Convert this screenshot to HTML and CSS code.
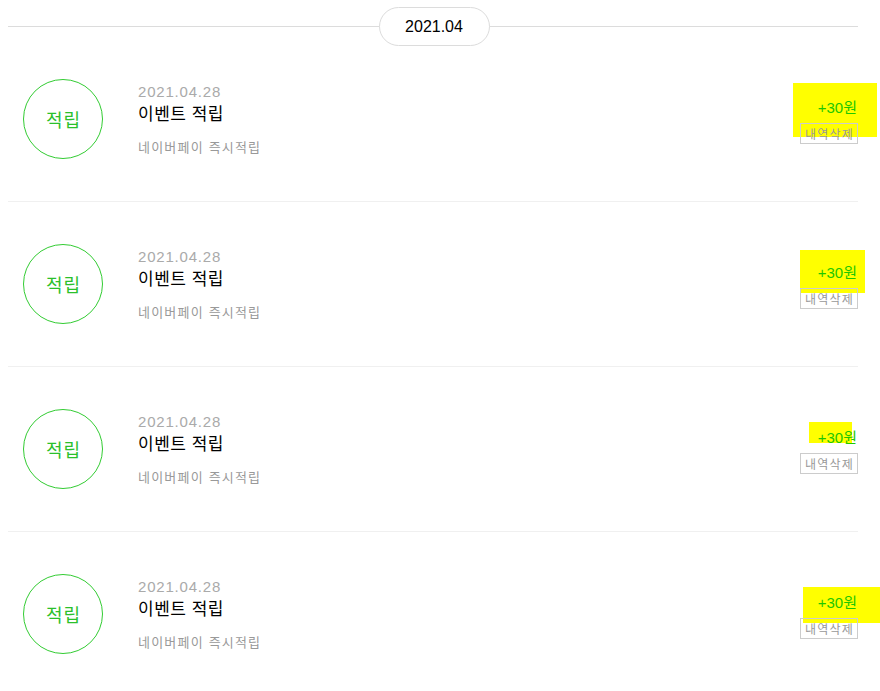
FILE: index.html
```html
<!DOCTYPE html>
<html lang="ko">
<head>
    <meta charset="UTF-8">
    <title>포인트 적립 내역</title>
    <link rel="stylesheet" href="styles.css">
</head>
<body>
    <div class="history">
        <div class="month">
            <span class="month-label">2021.04</span>
        </div>

        <ul class="list">
            <li class="item">
                <div class="mark mark1"></div>
                <div class="badge">적립</div>
                <div class="info">
                    <div class="date">2021.04.28</div>
                    <div class="title">이벤트 적립</div>
                    <div class="desc">네이버페이 즉시적립</div>
                </div>
                <div class="side">
                    <div class="amount">+30원</div>
                    <button class="del-btn">내역삭제</button>
                </div>
            </li>
            <li class="item">
                <div class="mark mark2"></div>
                <div class="badge">적립</div>
                <div class="info">
                    <div class="date">2021.04.28</div>
                    <div class="title">이벤트 적립</div>
                    <div class="desc">네이버페이 즉시적립</div>
                </div>
                <div class="side">
                    <div class="amount">+30원</div>
                    <button class="del-btn">내역삭제</button>
                </div>
            </li>
            <li class="item">
                <div class="mark mark3"></div>
                <div class="badge">적립</div>
                <div class="info">
                    <div class="date">2021.04.28</div>
                    <div class="title">이벤트 적립</div>
                    <div class="desc">네이버페이 즉시적립</div>
                </div>
                <div class="side">
                    <div class="amount">+30원</div>
                    <button class="del-btn">내역삭제</button>
                </div>
            </li>
            <li class="item">
                <div class="mark mark4"></div>
                <div class="badge">적립</div>
                <div class="info">
                    <div class="date">2021.04.28</div>
                    <div class="title">이벤트 적립</div>
                    <div class="desc">네이버페이 즉시적립</div>
                </div>
                <div class="side">
                    <div class="amount">+30원</div>
                    <button class="del-btn">내역삭제</button>
                </div>
            </li>
        </ul>
    </div>
</body>
</html>
```

FILE: styles.css
```css
body {
    margin: 0;
    padding: 0 8px;
    background: #fff;
    font-family: 'Noto Sans CJK KR', 'Liberation Sans', sans-serif;
    color: #000;
}
.history {
    width: 850px;
}
/* 월 구분선 */
.month {
    position: relative;
    display: flex;
    justify-content: center;
    padding-top: 7px;
}
.month:before {
    content: "";
    position: absolute;
    left: 0;
    right: 0;
    top: 26px;
    height: 1px;
    background: #dcdcdc;
}
.month-label {
    position: relative;
    box-sizing: border-box;
    width: 111px;
    height: 39px;
    line-height: 37px;
    text-align: center;
    border: 1px solid #dcdcdc;
    border-radius: 20px;
    background: #fff;
    font-family: 'Liberation Sans', sans-serif;
    font-size: 16px;
    margin-left: 2px;
}
.list {
    list-style: none;
    margin: 0;
    padding: 0;
}
.item {
    position: relative;
    display: flex;
    align-items: center;
    padding: 42px 0 42px 15px;
    border-bottom: 1px solid #f0f0f0;
}
.item:first-child {
    padding-top: 33px;
}
.item:last-child {
    border-bottom: none;
}
.badge {
    position: relative;
    box-sizing: border-box;
    width: 80px;
    height: 80px;
    flex-shrink: 0;
    border: 1px solid #3c3;
    border-radius: 50%;
    display: flex;
    align-items: center;
    justify-content: center;
    color: #2bc02b;
    font-size: 18px;
    letter-spacing: 1px;
    padding-left: 1px;
}
.info {
    flex: 1;
    align-self: flex-start;
    margin-left: 35px;
    padding-top: 4px;
}
.date {
    font-family: 'Liberation Sans', sans-serif;
    font-size: 15px;
    line-height: 18px;
    letter-spacing: 0.8px;
    color: #aaa;
}
.title {
    font-size: 17px;
    line-height: 22px;
    margin-top: 1px;
    letter-spacing: 0.5px;
}
.desc {
    font-size: 13px;
    line-height: 18px;
    margin-top: 14px;
    letter-spacing: 1.2px;
    color: #999;
}
.side {
    position: relative;
    display: flex;
    flex-direction: column;
    align-items: flex-end;
    margin-top: 4px;
}
.amount {
    font-family: 'Liberation Sans', 'Noto Sans CJK KR', sans-serif;
    font-size: 15px;
    line-height: 18px;
    color: #1ec800;
    margin-right: 1px;
}
.del-btn {
    box-sizing: border-box;
    width: 58px;
    height: 21px;
    margin-top: 6px;
    padding: 0 0 0 1px;
    border: 1px solid #ccc;
    background: transparent;
    color: #999;
    font-family: 'Noto Sans CJK KR', sans-serif;
    font-size: 12px;
    line-height: 19px;
    letter-spacing: 1.2px;
}
/* 형광펜 표시 */
.mark {
    position: absolute;
    background: #ff0;
}
.mark1 { left: 785px; top: 37px; width: 84px; height: 54px; }
.mark2 { left: 792px; top: 48px; width: 65px; height: 43px; }
.mark3 { left: 801px; top: 55px; width: 43px; height: 21px; }
.mark4 { left: 795px; top: 55px; width: 77px; height: 36px; }
```
